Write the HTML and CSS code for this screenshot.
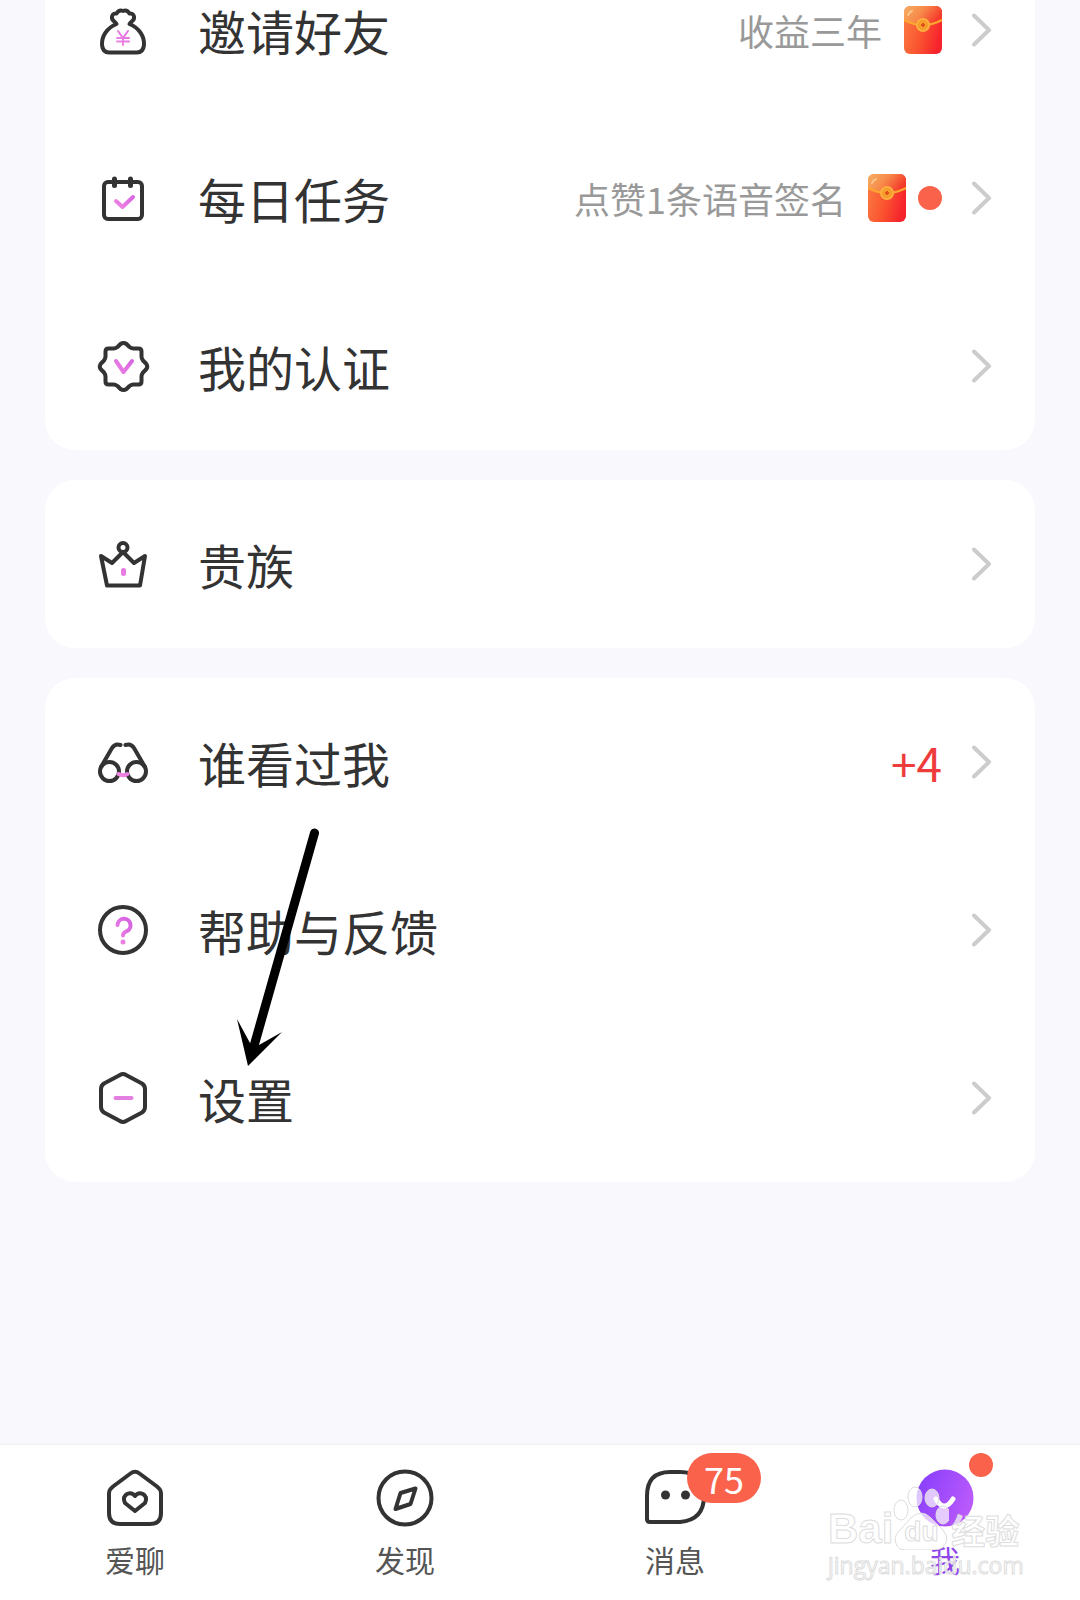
FILE: index.html
```html
<!DOCTYPE html>
<html lang="zh-CN">
<head>
<meta charset="utf-8">
<meta name="viewport" content="width=device-width, initial-scale=1">
<title>我</title>
<link rel="stylesheet" href="styles.css">
</head>
<body>
<svg class="defs" aria-hidden="true">
  <defs>
    <linearGradient id="pink" gradientUnits="userSpaceOnUse" x1="14" y1="38" x2="40" y2="16">
      <stop offset="0" stop-color="#f58ce2"/><stop offset="1" stop-color="#d05be2"/>
    </linearGradient>
    <linearGradient id="purple" x1="0" y1="0.3" x2="1" y2="0.7">
      <stop offset="0" stop-color="#8a3ffc"/><stop offset="1" stop-color="#bd5cfb"/>
    </linearGradient>
    <linearGradient id="red" x1="0" y1="0.2" x2="1" y2="0.5">
      <stop offset="0" stop-color="#fb7a42"/><stop offset="0.5" stop-color="#fa5530"/><stop offset="1" stop-color="#f6222c"/>
    </linearGradient>
    <linearGradient id="flap" x1="0" y1="0" x2="1" y2="0.4">
      <stop offset="0" stop-color="#f6b066"/><stop offset="0.5" stop-color="#f78a4a"/><stop offset="1" stop-color="#f53a2a"/>
    </linearGradient>
    <symbol id="chevron" viewBox="0 0 20 34">
      <path d="M2 2.500L17 17 2 31.500" fill="none" stroke="#ccc" stroke-width="4" stroke-linecap="round" stroke-linejoin="round"/>
    </symbol>
    <symbol id="envelope" viewBox="0 0 38 48">
      <rect width="38" height="48" rx="6" fill="url(#red)"/>
      <path d="M0 15V6a6 6 0 0 1 6-6h26a6 6 0 0 1 6 6v9Q19 24 0 15z" fill="url(#flap)"/>
      <path d="M0 14q19 10 38 0" fill="none" stroke="#fca52f" stroke-width="2"/>
      <path d="M4 9q1-3 4-4" fill="none" stroke="#fcc58c" stroke-width="2" stroke-linecap="round"/>
      <circle cx="19" cy="19" r="7" fill="#fdb040"/>
      <circle cx="19" cy="19" r="4.500" fill="#f9a02b" stroke="#f3952a"/>
      <path d="M19 17v4M17 19h4" stroke="#e0501c" stroke-width="2"/>
    </symbol>
  </defs>
</svg>

<main class="page">
  <ul class="card">
    <li><a class="row" href="#invite">
      <svg class="icon" viewBox="0 0 54 54" aria-hidden="true">
        <path class="line" d="M20.500 21C19 18.500 16.500 18 16 15.500 15.500 12 17.500 10 20.500 10.500 22 8 24.500 7 27 8 29.500 7 32 8 33.500 10.500 36.500 10 38.500 12 38 15.500 37.500 18 35 18.500 33.500 21 43 25 48.500 33 48 42 47.500 47 45 49.500 41 49.500H13C9 49.500 6.500 47 6 42 5.500 33 11 25 20.500 21z"/>
        <path class="accent thin" d="M22 28l5 7 5-7M21 35h12M21 38.500h12M27 35v7"/>
      </svg>
      <span class="title">邀请好友</span>
      <span class="note">收益三年</span>
      <svg class="gift" aria-hidden="true"><use href="#envelope"/></svg>
      <svg class="chevron" aria-hidden="true"><use href="#chevron"/></svg>
    </a></li>
    <li><a class="row" href="#tasks">
      <svg class="icon" viewBox="0 0 54 54" aria-hidden="true">
        <rect class="line" x="8" y="11" width="38" height="37" rx="4"/>
        <path class="line bold" d="M18.500 8v6.500M34.500 8v6.500"/>
        <path class="accent" d="M20 30l6.500 6L37 26"/>
      </svg>
      <span class="title">每日任务</span>
      <span class="note">点赞1条语音签名</span>
      <svg class="gift" aria-hidden="true"><use href="#envelope"/></svg>
      <span class="dot"></span>
      <svg class="chevron" aria-hidden="true"><use href="#chevron"/></svg>
    </a></li>
    <li><a class="row" href="#verify">
      <svg class="icon" viewBox="0 0 54 54" aria-hidden="true">
        <path class="line" d="M24.500 5q3-2 6 0l3 3q2 1.500 4 1.500h5q3 0 3 3v5q0 2 1.500 4l3 3q2.500 3 0 6l-3 3q-1.500 2-1.500 4v5q0 3-3 3h-5q-2 0-4 1.500l-3 3q-3 2-6 0l-3-3q-2-1.500-4-1.500h-5q-3 0-3-3v-5q0-2-1.500-4l-3-3q-2.500-3 0-6l3-3q1.500-2 1.500-4v-5q0-3 3-3h5q2 0 4-1.500z"/>
        <path class="accent" d="M20 22l7.500 11L36 22"/>
      </svg>
      <span class="title">我的认证</span>
      <svg class="chevron" aria-hidden="true"><use href="#chevron"/></svg>
    </a></li>
  </ul>

  <ul class="card">
    <li><a class="row" href="#noble">
      <svg class="icon" viewBox="0 0 54 54" aria-hidden="true">
        <circle class="line" cx="27" cy="10.500" r="4.500"/>
        <path class="line" d="M27 15l11 11 11-7L44 48.500H11L5 19l11 7z"/>
        <rect x="25" y="31" width="5" height="8" rx="2.500" fill="url(#pink)"/>
      </svg>
      <span class="title">贵族</span>
      <svg class="chevron" aria-hidden="true"><use href="#chevron"/></svg>
    </a></li>
  </ul>

  <ul class="card">
    <li><a class="row" href="#visitors">
      <svg class="icon" viewBox="0 0 54 54" aria-hidden="true">
        <circle class="line" cx="13.500" cy="36.500" r="9.500"/>
        <circle class="line" cx="40.500" cy="36.500" r="9.500"/>
        <path class="line" d="M5 32L16 13q3-5 8.500-3M49 32L38 13q-3-5-8.500-3"/>
        <path class="accent" d="M22.500 39q4.500 2.500 9 0"/>
      </svg>
      <span class="title">谁看过我</span>
      <span class="count">+4</span>
      <svg class="chevron" aria-hidden="true"><use href="#chevron"/></svg>
    </a></li>
    <li><a class="row" href="#help">
      <svg class="icon" viewBox="0 0 54 54" aria-hidden="true">
        <circle class="line" cx="27" cy="27" r="23"/>
        <path class="accent" d="M21.500 22a6.500 6.500 0 1 1 8.500 6.500q-3 1.500-3 4"/>
        <circle cx="27" cy="39" r="2.500" fill="url(#pink)"/>
      </svg>
      <span class="title">帮助与反馈</span>
      <svg class="chevron" aria-hidden="true"><use href="#chevron"/></svg>
    </a></li>
    <li><a class="row" href="#settings">
      <svg class="icon" viewBox="0 0 54 54" aria-hidden="true">
        <path class="line" d="M24 4q3-2 6 0l16 8.500q3 2 3 5.500v18q0 3.500-3 5.500L30 50q-3 2-6 0L8 41.500q-3-2-3-5.500V18q0-3.500 3-5.500z"/>
        <path d="M19.500 27h16" fill="none" stroke="#e37fe0" stroke-width="4" stroke-linecap="round"/>
      </svg>
      <span class="title">设置</span>
      <svg class="chevron" aria-hidden="true"><use href="#chevron"/></svg>
    </a></li>
  </ul>

  <svg class="pointer" viewBox="0 0 60 240" aria-hidden="true">
    <path d="M79.500 8L17 228" fill="none" stroke="#000" stroke-width="9" stroke-linecap="round"/>
    <path d="M2 194L15 218 24 220 47 207 13 241z"/>
  </svg>
</main>

<nav class="tabs">
  <a class="tab" href="#chat">
    <svg class="tab-icon" viewBox="0 0 58 58" aria-hidden="true">
      <path class="line" d="M24.500 4.500q4.500-3.500 9 0L51 17.500q4 3 4 7V44q0 11-11 11H14Q3 55 3 44V24.500q0-4 4-7z"/>
      <path class="line" d="M29 27q-3-4-8-2-5 3-2 9l10 8 10-8q3-6-2-9-5-2-8 2z"/>
    </svg>
    <span>爱聊</span>
  </a>
  <a class="tab" href="#discover">
    <svg class="tab-icon" viewBox="0 0 58 58" aria-hidden="true">
      <circle class="line" cx="29" cy="29" r="26.500"/>
      <path class="line" d="M39.500 19.500l-15 4.500-5 16 15-5z"/>
    </svg>
    <span>发现</span>
  </a>
  <a class="tab" href="#messages">
    <svg class="tab-icon" viewBox="0 0 58 58" aria-hidden="true">
      <path class="line" d="M1 27Q1 3 24 3h10q24 0 24 24T34 53H4q-3 0-3-3z"/>
      <circle cx="19.500" cy="26" r="4.500"/><circle cx="39.500" cy="26" r="4.500"/>
    </svg>
    <span>消息</span>
    <span class="badge">75</span>
  </a>
  <a class="tab active" href="#me">
    <svg class="tab-icon" viewBox="0 0 58 58" aria-hidden="true">
      <circle cx="29" cy="29" r="28.500" fill="url(#purple)"/>
      <path d="M20 30q8 14 17 0" fill="none" stroke="#fff" stroke-width="5" stroke-linecap="round"/>
    </svg>
    <span>我</span>
    <span class="dot tab-dot"></span>
  </a>
  <div class="mark" aria-hidden="true">
    <div class="mark-name">
      <span class="mark-latin">Bai</span>
      <span class="mark-paw">
        <svg width="56" height="64" viewBox="0 0 56 64">
          <g class="paw">
            <ellipse cx="8" cy="24" rx="7" ry="10"/>
            <ellipse cx="22" cy="11" rx="7" ry="10"/>
            <ellipse cx="39" cy="12" rx="7" ry="9"/>
            <ellipse cx="50" cy="29" rx="7" ry="9"/>
            <path d="M18 32q10-10 20 0l12 12q8 10-1 18-3 2-8 2H12Q6 64 4 60q-5-9 3-16z"/>
          </g>
        </svg>
        <span class="mark-du">du</span>
      </span>
      <span class="mark-han">经验</span>
    </div>
    <div class="mark-url">jingyan.baidu.com</div>
  </div>
</nav>
</body>
</html>
```
FILE: styles.css
```css
* {
  box-sizing: border-box;
}

body {
  margin: 0;
  min-height: 100vh;
  display: flex;
  flex-direction: column;
  overflow-x: hidden;
  background: #f8f8fd;
  color: #333;
  font-family: "Noto Sans CJK SC", sans-serif;
}

.defs {
  position: absolute;
  width: 0;
  height: 0;
}

.page {
  position: relative;
  flex: 1;
  display: flex;
  flex-direction: column;
  gap: 30px;
  /* the list is scrolled part of the way through its first row */
  margin-top: -54px;
  padding: 0 45px 30px;
}

.card {
  margin: 0;
  padding: 0;
  list-style: none;
  background: #fff;
  border-radius: 30px;
}

.row {
  display: flex;
  align-items: center;
  height: 168px;
  padding: 0 43px 0 51px;
  color: inherit;
  text-decoration: none;
}

.icon {
  width: 54px;
  height: 54px;
  margin-right: 48px;
}

.line {
  fill: none;
  stroke: #333;
  stroke-width: 4;
  stroke-linecap: round;
  stroke-linejoin: round;
}

.line.bold {
  stroke-width: 5;
}

.accent {
  fill: none;
  stroke: url(#pink);
  stroke-width: 4;
  stroke-linecap: round;
  stroke-linejoin: round;
}

.accent.thin {
  stroke-width: 2;
}

.title {
  flex: 1;
  font-size: 48px;
  line-height: 58px;
}

.note {
  margin-right: 22px;
  color: #999;
  font-size: 36px;
  line-height: 48px;
}

.gift {
  width: 38px;
  height: 48px;
}

.dot {
  width: 24px;
  height: 24px;
  margin-left: 12px;
  border-radius: 50%;
  background: #fa624b;
}

.count {
  color: #ee3b3b;
  font-size: 46px;
  line-height: 60px;
}

.chevron {
  width: 20px;
  height: 34px;
  margin-left: 30px;
}

.pointer {
  position: absolute;
  left: 235px;
  top: 879px;
  width: 60px;
  height: 240px;
  overflow: visible;
}

.tabs {
  position: relative;
  display: grid;
  grid-template-columns: repeat(4, 1fr);
  height: 156px;
  background: #fff;
  border-top: 1px solid #f1f1f5;
}

.tab {
  position: relative;
  display: flex;
  flex-direction: column;
  align-items: center;
  gap: 12px;
  padding-top: 24px;
  color: #555;
  font-size: 30px;
  line-height: 40px;
  text-decoration: none;
}

.tab.active {
  color: #8f45e8;
}

.tab-icon {
  width: 58px;
  height: 58px;
  fill: #333;
  overflow: visible;
}

.badge {
  position: absolute;
  top: 8px;
  left: calc(50% + 12px);
  width: 74px;
  border-radius: 25px;
  background: #fa624b;
  color: #fff;
  font-size: 36px;
  line-height: 50px;
  text-align: center;
}

.tab-dot {
  position: absolute;
  top: 8px;
  left: calc(50% + 12px);
}

.mark {
  position: absolute;
  right: 58px;
  bottom: 20px;
  width: 194px;
  color: rgba(255, 255, 255, 0.7);
  -webkit-text-stroke: 1px #ddd;
}

.mark-name {
  display: flex;
  align-items: flex-end;
  font-weight: 700;
}

.mark-latin {
  font-family: "Liberation Sans", sans-serif;
  font-size: 42px;
  line-height: 42px;
}

.mark-paw {
  position: relative;
  width: 56px;
  height: 64px;
}

.paw {
  fill: rgba(255, 255, 255, 0.7);
  stroke: #ddd;
}

.mark-du {
  position: absolute;
  left: 11px;
  bottom: 4px;
  font-family: "Liberation Sans", sans-serif;
  font-size: 28px;
  line-height: 28px;
}

.mark-han {
  margin-left: 2px;
  font-size: 34px;
  line-height: 40px;
}

.mark-url {
  font-family: "Open Sans", sans-serif;
  font-size: 23px;
  line-height: 30px;
}
```
